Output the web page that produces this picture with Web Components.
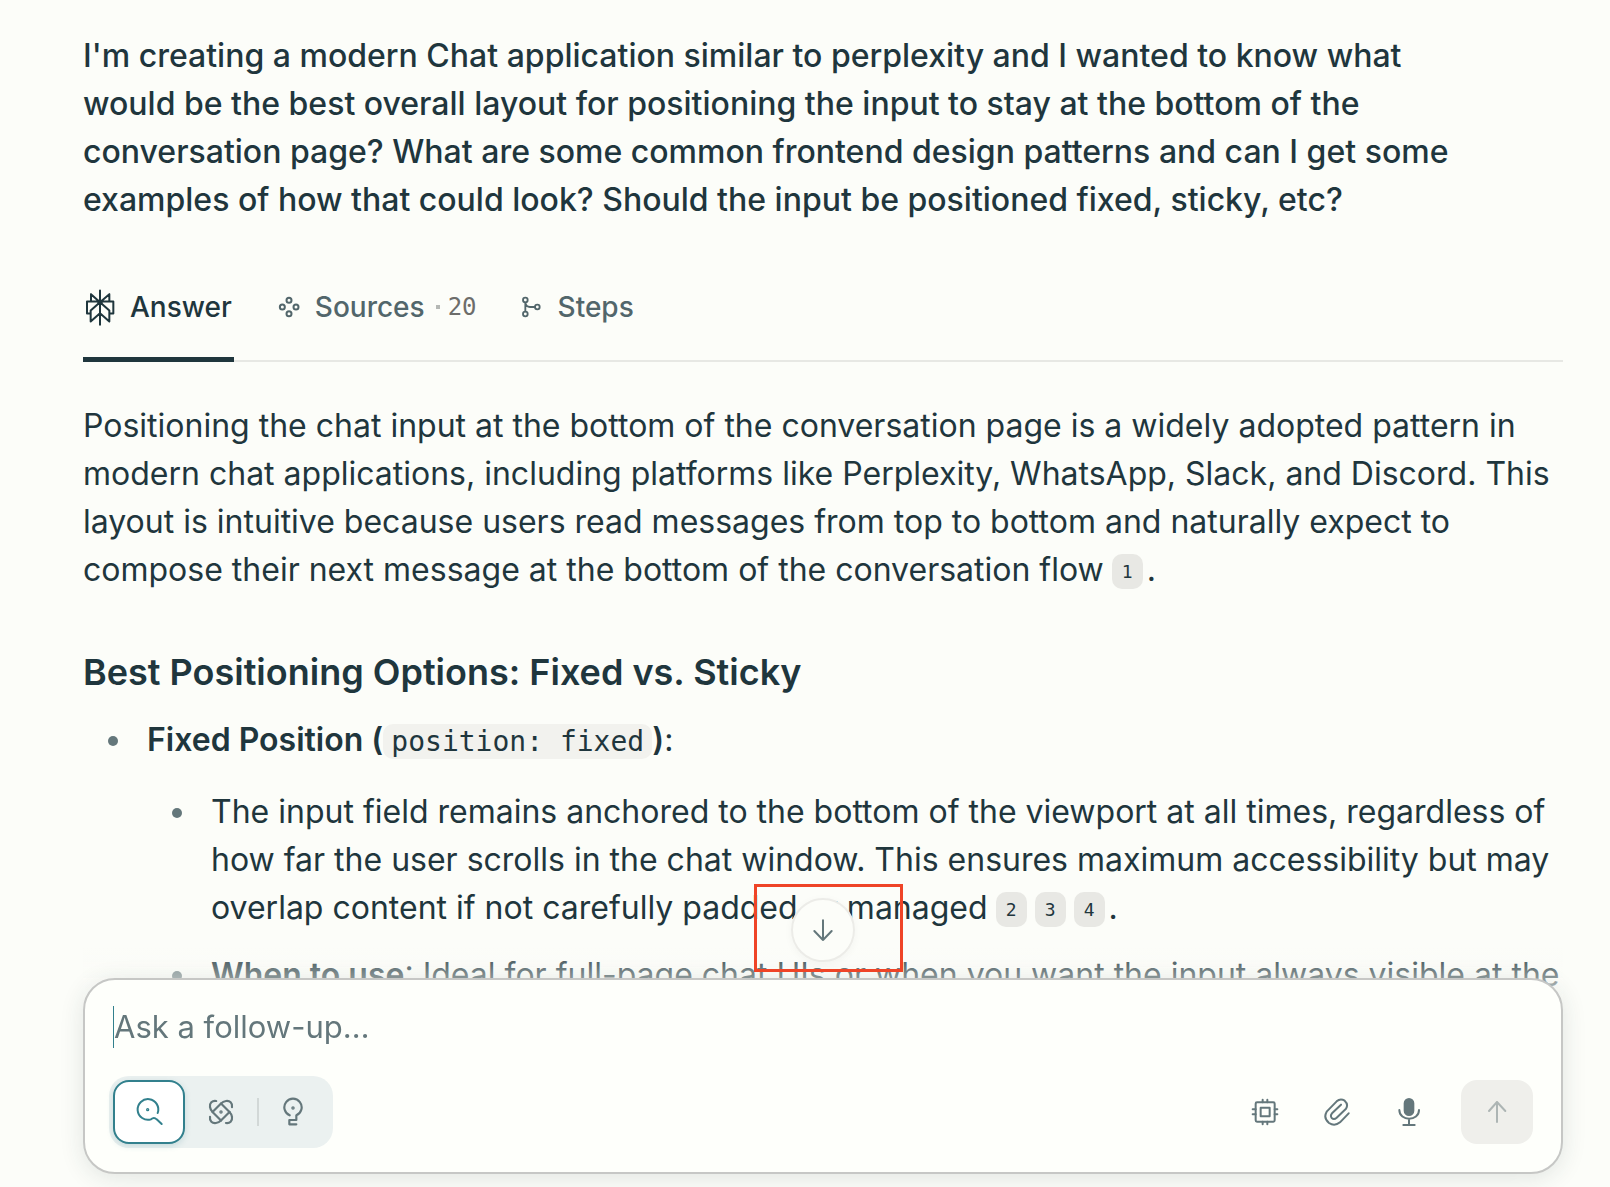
<!DOCTYPE html>
<html lang="en">
<head>
<meta charset="utf-8">
<meta name="viewport" content="width=device-width, initial-scale=1">
<title>Conversation</title>
<style>
  :root {
    --bg: #fcfdf9;
    --surface: #fefffb;
    --ink: #1f363d;
    --muted: #52666b;
    --soft: #64777b;
    --rule: #e7e8e4;
    --chip: #e8e8e4;
    --accent: #32808d;
    --sans: Inter, "Liberation Sans", sans-serif;
    --mono: "DejaVu Sans Mono", "Liberation Mono", monospace;
  }
  html, body { height: 100%; }
  body {
    margin: 0;
    overflow: hidden;
    background: var(--bg);
    color: var(--ink);
    font: 400 32px/48px var(--sans);
  }
</style>
</head>
<body>
<chat-page>
  <thread-question>I'm creating a modern Chat application similar to perplexity and I wanted to know what would be the best overall layout for positioning the input to stay at the bottom of the conversation page? What are some common frontend design patterns and can I get some examples of how that could look? Should the input be positioned fixed, sticky, etc?</thread-question>
  <answer-tabs></answer-tabs>
  <answer-body></answer-body>
  <follow-up slot="dock"></follow-up>
</chat-page>

<script>
const define = (name, markup) => {
  const template = document.createElement('template');
  template.innerHTML = markup;
  customElements.define(name, class extends HTMLElement {
    constructor() {
      super();
      this.attachShadow({ mode: 'open' }).append(template.content.cloneNode(true));
    }
  });
};

const icons = {
  logo: ['46 58 90 110', 30, 37, 6, '<path d="M91 62V165M91 97L64 73V95M91 97L119 73V95M63 131H52V95H131V131H119M91 97L63 122V155L91 130L119 155V122Z"/><circle cx="91" cy="97" r="5" fill="currentColor"/>'],
  sources: ['622 80 66 66', 22, 22, 6, '<circle cx="655" cy="93" r="7.5"/><circle cx="635" cy="113" r="7.5"/><circle cx="676" cy="113" r="7.5"/><circle cx="655" cy="133" r="7.5"/>'],
  steps: ['464 81 66 66', 22, 22, 5.5, '<circle cx="477" cy="93" r="7"/><circle cx="477" cy="135" r="7"/><circle cx="513" cy="114" r="7"/><path d="M477 101V127M477 101Q479 114 491 114H505"/>'],
  search: ['192 411 90 90', 30, 30, 6, '<path d="M263 459A31 31 0 1 0 243 478Q252 470 260 478L275 492"/><circle cx="233" cy="449" r="2"/>'],
  atom: ['408 411 90 90', 30, 30, 6.5, '<rect x="412" y="438" width="82" height="36" rx="24" ry="18" transform="rotate(-45 453 456)" pathLength="100" stroke-dasharray="41 8 42 8 1 0"/><rect x="412" y="438" width="82" height="36" rx="24" ry="18" transform="rotate(45 453 456)" pathLength="100" stroke-dasharray="41 8 42 8 1 0"/><circle cx="453" cy="456" r="2"/>'],
  bulb: ['624 411 90 90', 30, 30, 6.5, '<path d="M659 466A26 26 0 1 1 679 466V480H658V493H679"/><circle cx="669" cy="444" r="2"/>'],
  chip: ['90 411 90 90', 30, 30, 6, '<rect x="107" y="427" width="57" height="58" rx="4"/><rect x="122" y="443" width="27" height="26"/><path d="M128 419V427M142 419V427M128 485V493M142 485V493M98 448H107M98 463H107M164 448H172M164 463H172"/>'],
  clip: ['307 411 90 90', 30, 30, 6, '<path d="M387 460L361 487Q345 500 328 489Q310 474 321 455L351 424Q362 414 375 422Q387 433 379 446L351 473Q343 480 336 474Q331 467 337 460L364 434"/>'],
  mic: ['522 408 90 90', 30, 30, 6, '<rect x="554" y="414" width="26" height="48" rx="13" fill="currentColor"/><path d="M538 447C538 482 597 482 597 447M567 474V492M550 492H584"/>'],
  up: ['786 411 90 90', 30, 30, 6, '<path d="M831 486V426M807 453L831 426L856 453"/>'],
  down: ['204 135 90 90', 30, 30, 6, '<path d="M249 151V210M223 183L249 210L275 183"/>']
};

customElements.define('ui-icon', class extends HTMLElement {
  constructor() {
    super();
    this.attachShadow({ mode: 'open' });
  }
  connectedCallback() {
    const [box, w, h, stroke, shapes] = icons[this.getAttribute('name')];
    this.shadowRoot.innerHTML = `
      <style>:host { display: inline-flex; flex: none; } svg { display: block; }</style>
      <svg viewBox="${box}" width="${w}" height="${h}" fill="none" stroke="currentColor" stroke-width="${stroke}" stroke-linecap="round" stroke-linejoin="round" aria-hidden="true">${shapes}</svg>`;
  }
});

define('cite-badge', `
  <style>
    :host { display: inline-flex; vertical-align: 3px; margin: 0 4px 0 8px; }
    a { box-sizing: border-box; width: 31px; height: 35px; border-radius: 10px; background: var(--chip);
        color: var(--ink); font: 18px/35px var(--mono); text-align: center; text-decoration: none; }
  </style>
  <a href="#source"><slot></slot></a>`);

define('code-chip', `
  <style>
    :host { display: inline; }
    code { margin-left: -8px; padding: 1px 8px; border-radius: 10px; background: #f2f2ee; font: 400 28px/32px var(--mono); }
  </style>
  <code><slot></slot></code>`);

define('thread-question', `
  <style>
    :host { display: block; }
    h1 { margin: 0; max-width: 1400px; font: 500 32px/48px var(--sans); }
  </style>
  <h1><slot></slot></h1>`);

define('answer-tabs', `
  <style>
    :host { display: block; margin-top: 33px; }
    nav { display: flex; gap: 42px; border-bottom: 2px solid var(--rule); }
    button { display: flex; align-items: center; gap: 15px; height: 105px; margin: 0 0 -2px; padding: 0 0 0 2px;
             border: 0; border-bottom: 5px solid transparent; background: none; color: var(--muted);
             font: 500 28px/40px var(--sans); }
    button[aria-selected="true"] { padding-right: 2px; border-color: var(--ink); color: var(--ink); }
    .count { display: flex; gap: 8px; margin-left: -4px; font: 24px/40px var(--mono); color: #6d6d6b; }
    .count i { align-self: center; width: 4px; height: 4px; background: #b5b8b5; }
  </style>
  <nav role="tablist">
    <button role="tab" aria-selected="true"><ui-icon name="logo"></ui-icon>Answer</button>
    <button role="tab" aria-selected="false"><ui-icon name="sources"></ui-icon>Sources<span class="count"><i></i>20</span></button>
    <button role="tab" aria-selected="false"><ui-icon name="steps"></ui-icon>Steps</button>
  </nav>`);

define('answer-body', `
  <style>
    :host { display: block; margin-top: 40px; }
    p, h2, ul { margin: 0; }
    h2 { margin-top: 54px; font: 600 36px/48px var(--sans); }
    b { font-weight: 600; }
    ul { padding: 0; list-style: none; }
    cite-badge + cite-badge { margin-left: 4px; }
    .options { margin-top: 20px; }
    li { display: grid; grid-template-columns: 60px 1fr; column-gap: 4px; }
    li::before { content: ""; justify-self: center; width: 10px; height: 10px; margin-top: 20px; border-radius: 50%; background: var(--soft); }
    li li + li { margin-top: 19px; }
    .details { margin-top: 24px; }
  </style>
  <p>Positioning the chat input at the bottom of the conversation page is a widely adopted pattern in modern chat applications, including platforms like Perplexity, WhatsApp, Slack, and Discord. This layout is intuitive because users read messages from top to bottom and naturally expect to compose their next message at the bottom of the conversation flow<cite-badge>1</cite-badge>.</p>
  <h2>Best Positioning Options: Fixed vs. Sticky</h2>
  <ul class="options">
    <li><div><b>Fixed Position (<code-chip>position: fixed</code-chip>)</b>:
      <ul class="details">
        <li><div>The input field remains anchored to the bottom of the viewport at all times, regardless of how far the user scrolls in the chat window. This ensures maximum accessibility but may overlap content if not carefully padded or managed<cite-badge>2</cite-badge><cite-badge>3</cite-badge><cite-badge>4</cite-badge>.</div></li>
        <li><div><b>When to use</b>: Ideal for full-page chat UIs or when you want the input always visible at the</div></li>
      </ul></div></li>
  </ul>`);

define('follow-up', `
  <style>
    :host { display: flex; flex-direction: column; align-items: center; position: relative; padding-bottom: 13px; }
    :host::before { content: ""; position: absolute; inset: 48px 0 0; z-index: -1; background: linear-gradient(transparent, var(--bg) 64px); }
    button { display: flex; align-items: center; justify-content: center; box-sizing: border-box; width: 72px; height: 64px;
             margin: 0; padding: 0; border: 0; border-radius: 16px; background: none; color: var(--soft); }
    .jump { width: 64px; height: 64px; margin-bottom: 16px; border: 2px solid #ecece8; border-radius: 50%; background: var(--bg);
            box-shadow: 0 2px 8px rgb(0 0 0 / 4%); }
    .marker { position: absolute; top: -14px; left: calc(50% - 69px); box-sizing: border-box; width: 149px; height: 88px;
              border: 3px solid #ef4427; pointer-events: none; }
    form { box-sizing: border-box; width: 100%; padding: 26px 28px 24px; border: 2px solid #c6c7c5; border-radius: 32px;
           background: var(--surface); box-shadow: 0 4px 24px rgb(31 54 61 / 12%); }
    input { display: block; box-sizing: border-box; width: 100%; height: 42px; margin: 0; padding: 0; border: 0;
            border-left: 1px solid var(--accent); outline: 0; background: none; color: var(--ink); font: 31px/42px var(--sans); }
    input::placeholder { color: var(--soft); opacity: 1; }
    .row { display: flex; justify-content: space-between; align-items: center; margin-top: 28px; }
    .modes { display: flex; align-items: center; margin-left: -4px; padding: 4px; border-radius: 20px; background: #ebf1f0; }
    .modes .on { border: 2px solid var(--accent); background: #fff; color: var(--accent); box-shadow: 0 2px 6px rgb(50 128 141 / 20%); }
    .modes hr { width: 2px; height: 28px; margin: 0 -2px 0 0; border: 0; background: #d2d8d7; }
    .tools { display: flex; }
    .send { margin-left: 16px; background: #efefeb; color: #adb5b4; }
  </style>
  <button class="jump" aria-label="Scroll to bottom"><ui-icon name="down"></ui-icon></button>
  <div class="marker"></div>
  <form>
    <input type="text" aria-label="Ask a follow-up" placeholder="Ask a follow-up…">
    <div class="row">
      <div class="modes">
        <button type="button" class="on" aria-label="Search"><ui-icon name="search"></ui-icon></button>
        <button type="button" aria-label="Research"><ui-icon name="atom"></ui-icon></button>
        <hr>
        <button type="button" aria-label="Labs"><ui-icon name="bulb"></ui-icon></button>
      </div>
      <div class="tools">
        <button type="button" aria-label="Choose a model"><ui-icon name="chip"></ui-icon></button>
        <button type="button" aria-label="Attach"><ui-icon name="clip"></ui-icon></button>
        <button type="button" aria-label="Dictate"><ui-icon name="mic"></ui-icon></button>
        <button type="button" class="send" aria-label="Submit"><ui-icon name="up"></ui-icon></button>
      </div>
    </div>
  </form>`);

define('chat-page', `
  <style>
    :host { display: block; height: 100%; }
    main { padding: 32px 47px 0 83px; }
    footer { position: fixed; z-index: 1; left: 83px; right: 47px; bottom: 0; }
  </style>
  <main><slot></slot></main>
  <footer><slot name="dock"></slot></footer>`);
</script>
</body>
</html>
